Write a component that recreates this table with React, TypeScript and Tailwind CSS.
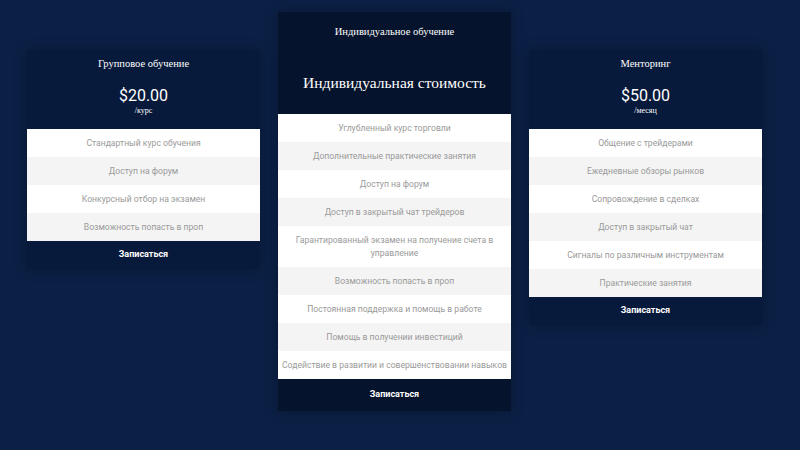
import React from "react";

interface Plan {
  title: string;
  price?: string;
  period?: string;
  big?: string;
  features: string[];
  featured?: boolean;
}

const plans: Plan[] = [
  {
    title: "Групповое обучение",
    price: "$20.00",
    period: "/курс",
    features: [
      "Стандартный курс обучения",
      "Доступ на форум",
      "Конкурсный отбор на экзамен",
      "Возможность попасть в проп",
    ],
  },
  {
    title: "Индивидуальное обучение",
    big: "Индивидуальная стоимость",
    featured: true,
    features: [
      "Углубленный курс торговли",
      "Дополнительные практические занятия",
      "Доступ на форум",
      "Доступ в закрытый чат трейдеров",
      "Гарантированный экзамен на получение счета в управление",
      "Возможность попасть в проп",
      "Постоянная поддержка и помощь в работе",
      "Помощь в получении инвестиций",
      "Содействие в развитии и совершенствовании навыков",
    ],
  },
  {
    title: "Менторинг",
    price: "$50.00",
    period: "/месяц",
    features: [
      "Общение с трейдерами",
      "Ежедневные обзоры рынков",
      "Сопровождение в сделках",
      "Доступ в закрытый чат",
      "Сигналы по различным инструментам",
      "Практические занятия",
    ],
  },
];

const serif = "font-['Liberation_Serif',serif]";
const sans = "font-['Roboto',sans-serif]";

const PlanCard: React.FC<{ plan: Plan }> = ({ plan }) => {
  const featured = plan.featured;
  return (
    <div
      className={`w-[233px] shrink-0 flex flex-col shadow-[0_0_12px_rgba(0,0,0,0.25)] ${
        featured ? "bg-[#06132c] -mt-[38px]" : "bg-[#081a3b]"
      }`}
    >
      {/* шапка */}
      <div className={`flex flex-col items-center text-white ${featured ? "pt-[13px] pb-[20px]" : "pt-[7px] pb-[13px]"}`}>
        <div className={`${serif} text-[10.5px] leading-[14px]`}>{plan.title}</div>
        {plan.big ? (
          <div className={`${serif} text-[15.5px] leading-[22px] mt-[33px]`}>{plan.big}</div>
        ) : (
          <>
            <div className={`${sans} text-[16px] leading-[20px] mt-[15px]`}>{plan.price}</div>
            <div className={`${serif} text-[8px] leading-[10px]`}>{plan.period}</div>
          </>
        )}
      </div>

      {/* список */}
      <ul className="flex flex-col">
        {plan.features.map((f, i) => (
          <li
            key={i}
            className={`${sans} text-[8.6px] leading-[13px] text-[#9a9a9a] text-center px-[3px] py-[7.5px] ${
              i % 2 === 0 ? "bg-white" : "bg-[#f4f4f4]"
            }`}
          >
            {f}
          </li>
        ))}
      </ul>

      <button
        className={`${sans} text-[9px] font-bold text-white flex items-center justify-center ${
          featured ? "h-[32px]" : "h-[28px]"
        }`}
      >
        Записаться
      </button>
    </div>
  );
};

export default function App() {
  return (
    <div className="w-[800px] h-[450px] bg-[#0b2045] overflow-hidden">
      <div className="flex items-start gap-[18px] pl-[27px] pt-[50px]">
        {plans.map((p) => (
          <PlanCard key={p.title} plan={p} />
        ))}
      </div>
    </div>
  );
}
